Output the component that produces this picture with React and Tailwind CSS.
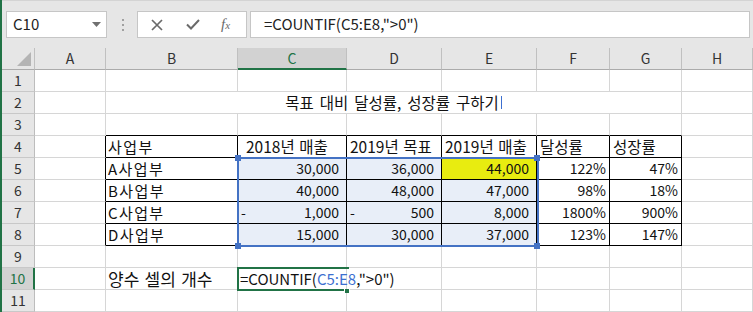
import React from "react";

const COLS = ["A", "B", "C", "D", "E", "F", "G", "H"];

const data = {
  5: ["A사업부", ["", "30,000"], ["", "36,000"], ["", "44,000"], "122%", "47%"],
  6: ["B사업부", ["", "40,000"], ["", "48,000"], ["", "47,000"], "98%", "18%"],
  7: ["C사업부", ["-", "1,000"], ["-", "500"], ["", "8,000"], "1800%", "900%"],
  8: ["D사업부", ["", "15,000"], ["", "30,000"], ["", "37,000"], "123%", "147%"],
};

function Cell({ black, blackBottom, className = "", children }) {
  return (
    <div
      className={
        "h-[22px] box-border border-r border-b flex items-center leading-[19px] text-[#111] whitespace-nowrap " +
        (black ? "border-r-black " : "border-r-[#d6d6d6] ") +
        (blackBottom ? "border-b-black " : "border-b-[#d6d6d6] ") +
        className
      }
    >
      {children}
    </div>
  );
}

function RowHeader({ n }) {
  const sel = n === 10;
  return (
    <div
      className={
        "h-[22px] box-border border-b border-b-[#c8c8c8] flex items-center justify-center text-[14px] leading-[19px] " +
        (sel
          ? "bg-[#d2d2d2] text-[#217346] border-r-2 border-r-[#217346]"
          : "bg-[#e6e6e6] text-[#333] border-r border-r-[#bdbdbd]")
      }
    >
      {n}
    </div>
  );
}

const HEAD = { B: "사업부", C: "2018년 매출", D: "2019년 목표", E: "2019년 매출", F: "달성률", G: "성장률" };

function Row({ n }) {
  const cells = [];
  cells.push(<RowHeader key="h" n={n} />);
  if (n === 2) {
    cells.push(<Cell key="A" />);
    cells.push(
      <Cell key="title" className="col-span-6 justify-center text-[15.5px] [word-spacing:2.5px]">
        <span>목표 대비 달성률, 성장률 구하기</span>
        <span className="ml-[2px] w-[1px] h-[13px] bg-[#3c6fd0]" />
      </Cell>
    );
    cells.push(<Cell key="H" />);
    return cells;
  }
  const inTable = n >= 4 && n <= 8;
  COLS.forEach((c, i) => {
    const black = inTable && i <= 6;
    const blackBottom = n >= 3 && n <= 8 && i >= 1 && i <= 6;
    let content = null;
    let cls = "";
    if (n === 4) {
      const h = HEAD[c];
      if (h) {
        content = h;
        if (c === "B") cls = "pl-[2px] text-[15px] tracking-[1.4px]";
        else if (c === "C") cls = "pl-[8px] text-[15.5px] [word-spacing:1px]";
        else cls = "pl-[3px] text-[15.5px] [word-spacing:1px]";
      }
    } else if (data[n]) {
      const row = data[n];
      if (c === "B") {
        content = row[0];
        cls = "pl-[2px] text-[15px] tracking-[1.4px]";
      } else if (c === "C" || c === "D" || c === "E") {
        const v = row[{ C: 1, D: 2, E: 3 }[c]];
        content = (
          <>
            <span>{v[0]}</span>
            <span>{v[1]}</span>
          </>
        );
        cls =
          "justify-between pl-[3px] pr-[7px] text-[14px] " +
          (n === 5 && c === "E" ? "bg-[#e8ec10]" : "bg-[#e8eef8]");
      } else if (c === "F" || c === "G") {
        content = row[c === "F" ? 4 : 5];
        cls = "justify-end pr-[3px] text-[14px]";
      }
    } else if (n === 10) {
      if (c === "B") {
        content = "양수 셀의 개수";
        cls = "pl-[2px] text-[17px] [word-spacing:1.5px]";
      } else if (c === "C") {
        content = (
          <span className="relative z-30">
            =COUNTIF(<span className="text-[#3c6fd0]">C5:E8</span>,"&gt;0")
          </span>
        );
        cls = "pl-[2px] overflow-visible text-[15px]";
      }
    }
    cells.push(
      <Cell key={c} black={black} blackBottom={blackBottom} className={cls}>
        {content}
      </Cell>
    );
  });
  return cells;
}

export default function App() {
  return (
    <div className="w-[753px] h-[312px] overflow-hidden flex bg-[#e6e6e6] font-['Noto_Sans_CJK_KR',sans-serif]">
      <div className="w-[2px] h-full bg-[#217346] shrink-0" />
      <div className="flex flex-col w-[751px]">
        {/* toolbar */}
        <div className="h-[48px] border-t border-t-[#d4d4d4] flex items-start pt-[10px]">
          <div className="ml-[4px] w-[101px] h-[27px] bg-white border border-[#c6c6c6] flex items-center justify-between pl-[6px] pr-[5px]">
            <span className="text-[15px] text-[#222]">C10</span>
            <svg width="9" height="5" viewBox="0 0 9 5">
              <path d="M0 0 L9 0 L4.5 5 Z" fill="#707070" />
            </svg>
          </div>
          <div className="ml-[15px] mt-[8px] flex flex-col gap-[3px]">
            <span className="w-[2px] h-[2px] bg-[#a0a0a0]" />
            <span className="w-[2px] h-[2px] bg-[#a0a0a0]" />
            <span className="w-[2px] h-[2px] bg-[#a0a0a0]" />
          </div>
          <div className="ml-[13px] w-[110px] h-[27px] bg-white border border-[#c6c6c6] flex items-center">
            <svg className="ml-[13px]" width="12" height="12" viewBox="0 0 12 12">
              <path d="M1 1 L11 11 M11 1 L1 11" stroke="#6a6a6a" strokeWidth="1.7" />
            </svg>
            <svg className="ml-[23px]" width="14" height="11" viewBox="0 0 14 11">
              <path d="M1 5.5 L5 9.5 L13 1" stroke="#6a6a6a" strokeWidth="2" fill="none" />
            </svg>
            <span className="ml-[21px] text-[#6a6a6a] italic text-[15px] leading-none font-['Liberation_Serif',serif]">
              f<span className="text-[11px]">x</span>
            </span>
          </div>
          <div className="ml-[3px] w-[500px] h-[27px] bg-white border border-[#c6c6c6] flex items-center pl-[13px]">
            <span className="text-[15px] text-[#222]">=COUNTIF(C5:E8,"&gt;0")</span>
          </div>
        </div>
        {/* grid */}
        <div className="relative bg-white">
          <div className="grid grid-cols-[33px_71px_132px_109px_95px_95px_73px_72px_71px]">
            <div className="h-[22px] bg-[#e6e6e6] border-b border-b-[#ababab] border-r border-r-[#c0c0c0] relative">
              <svg className="absolute right-[3px] bottom-[3px]" width="14" height="14" viewBox="0 0 14 14">
                <path d="M14 0 L14 14 L0 14 Z" fill="#b4b4b4" />
              </svg>
            </div>
            {COLS.map((c) => (
              <div
                key={c}
                className={
                  "h-[22px] flex items-center justify-center text-[14px] leading-[19px] box-border border-r border-r-[#c0c0c0] " +
                  (c === "C"
                    ? "bg-[#d2d2d2] text-[#217346] border-b-2 border-b-[#217346]"
                    : "bg-[#e6e6e6] text-[#333] border-b border-b-[#ababab]")
                }
              >
                {c}
              </div>
            ))}
            {Array.from({ length: 11 }, (_, i) => (
              <Row key={i} n={i + 1} />
            ))}
          </div>
          {/* formula reference highlight */}
          <div className="absolute left-[235px] top-[109px] w-[302px] h-[90px] border-2 border-[#4472c4] pointer-events-none" />
          <div className="absolute left-[233px] top-[107px] w-[6px] h-[6px] bg-[#4472c4]" />
          <div className="absolute left-[532px] top-[107px] w-[6px] h-[6px] bg-[#4472c4]" />
          <div className="absolute left-[233px] top-[195px] w-[6px] h-[6px] bg-[#4472c4]" />
          <div className="absolute left-[532px] top-[195px] w-[6px] h-[6px] bg-[#4472c4]" />
          {/* active cell */}
          <div className="absolute left-[235px] top-[219px] w-[112px] h-[24px] border-2 border-r-0 border-[#217346] pointer-events-none z-20" />
          <div className="absolute left-[342px] top-[241px] w-[6px] h-[4px] bg-[#217346] border-x border-white z-20" />
        </div>
      </div>
    </div>
  );
}
